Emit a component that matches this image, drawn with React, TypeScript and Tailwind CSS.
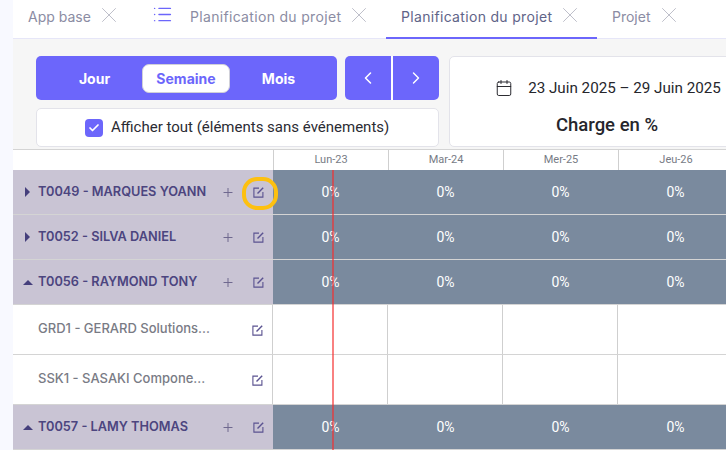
import { Calendar, ChevronLeft, ChevronRight, List, Plus, X, Check } from 'lucide-react';

const days = ['Lun-23', 'Mar-24', 'Mer-25', 'Jeu-26'];

const rows = [
  { label: 'T0049 - MARQUES YOANN', kind: 'closed', h: 'h-[45px]' },
  { label: 'T0052 - SILVA DANIEL', kind: 'closed', h: 'h-[45px]' },
  { label: 'T0056 - RAYMOND TONY', kind: 'open', h: 'h-[45px]' },
  { label: 'GRD1 - GERARD Solutions...', kind: 'child', h: 'h-[50px]' },
  { label: 'SSK1 - SASAKI Compone...', kind: 'child', h: 'h-[50px]' },
  { label: 'T0057 - LAMY THOMAS', kind: 'open', h: 'h-[45px]' },
];

function EditIcon() {
  return (
    <svg width="11" height="11" viewBox="0 0 11 11" fill="none" stroke="#5a5290" strokeWidth="1.1">
      <path d="M6 1.1H.9v9h9V5" />
      <path d="M4.5 6.5 10.2.8" strokeWidth="1.4" />
    </svg>
  );
}

function Tab({ label, active, list, wide, className }: { label: string; active?: boolean; list?: boolean; wide?: boolean; className: string }) {
  return (
    <div className={`flex items-center h-[39px] pb-[5px] border-b-2 ${active ? 'border-[#6c66fb]' : 'border-transparent'} ${className}`}>
      {list && <List size={21} strokeWidth={1.7} className="text-[#6c66fb] -ml-[2px] mr-[17px] -mt-[3px]" />}
      <span className={`text-[14px] whitespace-nowrap ${wide ? 'tracking-[0.32px]' : ''} ${active ? 'text-[#5f6488]' : 'text-[#8b8ca3]'}`}>{label}</span>
      <X size={26} strokeWidth={0.8} className="text-[#b4b5c2] ml-[5px] -mt-[2px] shrink-0" />
    </div>
  );
}

export default function App() {
  return (
    <div className="flex w-[726px] h-[450px] overflow-hidden bg-white font-['Inter',sans-serif]">
      <div className="w-[13px] shrink-0 bg-[#f8f9ff]" />
      <div className="flex flex-col w-[713px] shrink-0 overflow-hidden">
        {/* tabs */}
        <div className="flex h-[39px] shrink-0 border-b border-[#e6e6f8] bg-white">
          <Tab label="App base" className="pl-[15px] w-[141px]" />
          <Tab label="Planification du projet" list wide className="pl-[0px] w-[232px]" />
          <Tab label="Planification du projet" wide active className="pl-[15px] w-[211px]" />
          <Tab label="Projet" className="pl-[15px]" />
        </div>

        {/* toolbar */}
        <div className="flex h-[111px] shrink-0 gap-[10px] bg-[#f6f6f6] pl-[23px] pt-[17px] border-b border-[#d4d4d4]">
          <div className="flex flex-col gap-[8px] w-[403px] shrink-0">
            <div className="flex gap-[8px]">
              <div className="flex items-center w-[301px] h-[44px] rounded-[5px] bg-[#6c66fb] pl-[7px] text-[14px] font-bold text-white">
                <span className="w-[99px] pl-[4px] text-center">Jour</span>
                <span className="flex items-center justify-center w-[88px] h-[29px] rounded-[7px] border border-[#d0d0d8] bg-white text-[#6c66fb]">Semaine</span>
                <span className="w-[97px] text-center">Mois</span>
              </div>
              <div className="flex items-center w-[94px] h-[44px] rounded-[5px] bg-[#6c66fb] text-white">
                <div className="flex items-center justify-center w-[48px] h-full border-r-2 border-white"><ChevronLeft size={20} strokeWidth={1.9} /></div>
                <div className="flex items-center justify-center flex-1 h-full"><ChevronRight size={20} strokeWidth={1.7} /></div>
              </div>
            </div>
            <div className="flex items-center h-[39px] rounded-[5px] border border-[#e3e3ea] bg-white pl-[48px]">
              <span className="flex items-center justify-center w-[18px] h-[18px] rounded-[4px] bg-[#6c66fb]">
                <Check size={12} strokeWidth={3.5} className="text-white" />
              </span>
              <span className="ml-[8px] text-[15px] text-[#2b2b33] font-['Roboto',sans-serif] whitespace-nowrap">Afficher tout (éléments sans événements)</span>
            </div>
          </div>
          <div className="flex flex-col items-center w-[316px] shrink-0 h-[91px] rounded-l-[5px] border border-[#e3e3ea] bg-white font-['Roboto',sans-serif] text-[#26262c]">
            <div className="flex items-center h-[58px] pt-[4px] pl-[2px]">
              <Calendar size={18} strokeWidth={1.3} className="mr-[15px]" />
              <span className="text-[15.2px] whitespace-nowrap">23 Juin 2025 – 29 Juin 2025</span>
            </div>
            <span className="text-[18.5px] font-medium leading-[24px] -mt-[2px]">Charge en %</span>
          </div>
        </div>

        {/* planning */}
        <div className="relative flex-1 overflow-hidden">
          <div className="flex h-[20px]">
            <div className="w-[260px] shrink-0" />
            {days.map(d => (
              <div key={d} className="w-[115px] shrink-0 border-l border-[#cfcfcf] text-center text-[11px] leading-[19px] text-[#777b85] font-['Roboto',sans-serif]">{d}</div>
            ))}
          </div>
          {rows.map(r => {
            const child = r.kind === 'child';
            return (
              <div key={r.label} className={`flex ${r.h} border-b border-[#d4d4d4] ${child ? 'bg-white' : 'bg-[#c9c4d4]'}`}>
                <div className={`relative flex items-center w-[260px] shrink-0 ${child ? 'border-r border-[#cfcfcf]' : ''}`}>
                  <span className="flex items-center justify-center w-[25px] shrink-0 pl-[4px]">
                    {r.kind === 'closed' && <span className="w-0 h-0 border-y-[5px] border-y-transparent border-l-[5px] border-l-[#453f7c]" />}
                    {r.kind === 'open' && <span className="w-0 h-0 border-x-[5px] border-x-transparent border-b-[5px] border-b-[#453f7c]" />}
                  </span>
                  <span className={`leading-none whitespace-nowrap ${child ? '-mt-[2px] text-[13px] font-medium text-[#797b85]' : 'text-[12.75px] font-semibold text-[#4c457f]'}`}>{r.label}</span>
                  {!child && (
                    <span className="absolute left-[208px] top-1/2 -translate-y-1/2 pt-[1px]">
                      <Plus size={14} strokeWidth={1.7} className="text-[#6d678e]" />
                    </span>
                  )}
                  <span className={`absolute top-1/2 -translate-y-1/2 pt-[1px] ${child ? 'left-[239px]' : 'left-[240px]'}`}><EditIcon /></span>
                </div>
                {days.map(d => (
                  <div key={d} className={`flex items-center justify-center w-[115px] shrink-0 text-[14px] text-white font-['Roboto',sans-serif] ${child ? 'border-r border-[#cfcfcf]' : 'bg-[#7a8a9e]'}`}>
                    {!child && <span className="pt-[1px]">0%</span>}
                  </div>
                ))}
              </div>
            );
          })}
          {/* today line */}
          <div className="absolute left-[319px] top-[20px] bottom-0 w-[2px] bg-[#f52d2d]/60" />
          {/* highlight */}
          <div className="absolute left-[229px] top-[27px] w-[36px] h-[33px] rounded-[15px] border-4 border-[#fdc010]" />
        </div>
      </div>
    </div>
  );
}
